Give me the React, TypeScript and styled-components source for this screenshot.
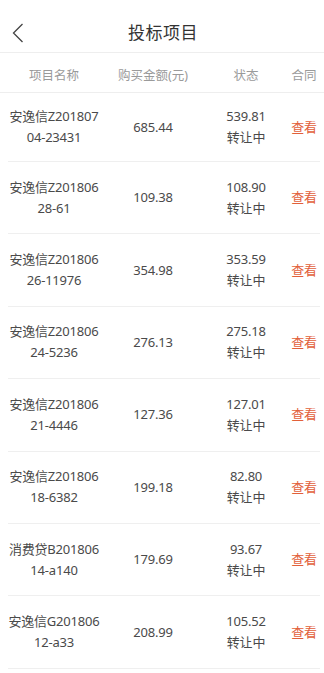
import styled, { createGlobalStyle } from "styled-components";

const GlobalStyle = createGlobalStyle`
    body {
        margin: 0;
        background: #fff;
        font-family: "Noto Sans", "Noto Sans CJK SC", sans-serif;
        color: #333;
    }
`;

const Page = styled.div`
    width: 324px;
    background: #fff;
`;

const NavBar = styled.header`
    position: relative;
    height: 52px;
    display: flex;
    align-items: center;
    justify-content: center;
    border-bottom: 1px solid #eeeeee;
`;

const BackButton = styled.button`
    position: absolute;
    left: 8px;
    top: 20px;
    width: 20px;
    height: 26px;
    padding: 0;
    border: none;
    background: none;
    display: flex;
    align-items: center;
    justify-content: center;
`;

const Title = styled.h1`
    margin: 10px 0 0 2px;
    font-size: 17px;
    font-weight: normal;
    color: #333;
    letter-spacing: 0.5px;
`;

const Columns = "92px 106px 80px 36px";

const HeadRow = styled.div`
    height: 39px;
    display: grid;
    grid-template-columns: ${Columns};
    padding-left: 8px;
    align-items: center;
    border-bottom: 1px solid #eeeeee;
`;

const HeadCell = styled.div`
    text-align: center;
    font-size: 12.5px;
    color: #9a9a9a;
    padding-top: 4px;
    white-space: nowrap;
`;

const Row = styled.div`
    height: 71.4px;
    margin-left: 8px;
    margin-right: 4px;
    display: grid;
    grid-template-columns: ${Columns};
    align-items: center;
    border-bottom: 1px solid #efefef;

    &:first-child {
        height: 68px;
    }
`;

const Cell = styled.div<{ $accent?: boolean }>`
    text-align: center;
    font-size: 13px;
    line-height: 21px;
    letter-spacing: -0.2px;
    color: ${(p) => (p.$accent ? "#e2603a" : "#4a4a4a")};
    white-space: pre;
`;

interface Item {
    name: string;
    amount: string;
    price: string;
}

const items: Item[] = [
    { name: "安逸信Z201807\n04-23431", amount: "685.44", price: "539.81" },
    { name: "安逸信Z201806\n28-61", amount: "109.38", price: "108.90" },
    { name: "安逸信Z201806\n26-11976", amount: "354.98", price: "353.59" },
    { name: "安逸信Z201806\n24-5236", amount: "276.13", price: "275.18" },
    { name: "安逸信Z201806\n21-4446", amount: "127.36", price: "127.01" },
    { name: "安逸信Z201806\n18-6382", amount: "199.18", price: "82.80" },
    { name: "消费贷B201806\n14-a140", amount: "179.69", price: "93.67" },
    { name: "安逸信G201806\n12-a33", amount: "208.99", price: "105.52" },
];

export default function App() {
    return (
        <Page>
            <GlobalStyle />
            <NavBar>
                <BackButton aria-label="返回">
                    <svg width="12" height="20" viewBox="0 0 12 20">
                        <path d="M10.5 1 L1.5 10 L10.5 19" fill="none" stroke="#444" strokeWidth="1.3" />
                    </svg>
                </BackButton>
                <Title>投标项目</Title>
            </NavBar>
            <HeadRow>
                <HeadCell>项目名称</HeadCell>
                <HeadCell>购买金额(元)</HeadCell>
                <HeadCell>状态</HeadCell>
                <HeadCell>合同</HeadCell>
            </HeadRow>
            <div>
                {items.map((item) => (
                    <Row key={item.name}>
                        <Cell>{item.name}</Cell>
                        <Cell>{item.amount}</Cell>
                        <Cell>{item.price + "\n转让中"}</Cell>
                        <Cell $accent>查看</Cell>
                    </Row>
                ))}
            </div>
        </Page>
    );
}
